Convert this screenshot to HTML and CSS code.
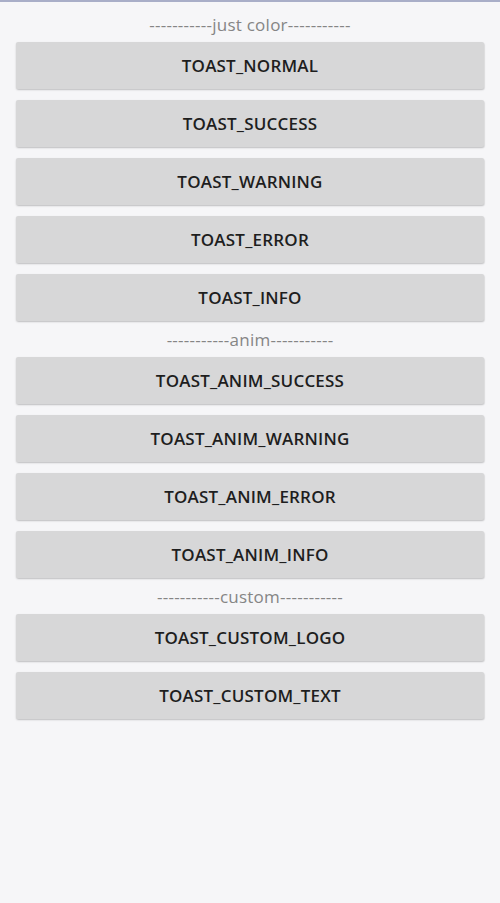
FILE: index.html
```html
<!DOCTYPE html>
<html>
<head>
<meta charset="utf-8">
<link rel="stylesheet" href="styles.css">
</head>
<body>
<div class="topline"></div>
<main class="list">
  <div class="label">-----------just color-----------</div>
  <div class="buttons">
    <button class="btn">TOAST_NORMAL</button>
    <button class="btn">TOAST_SUCCESS</button>
    <button class="btn">TOAST_WARNING</button>
    <button class="btn">TOAST_ERROR</button>
    <button class="btn">TOAST_INFO</button>
  </div>
  <div class="label">-----------anim-----------</div>
  <div class="buttons">
    <button class="btn">TOAST_ANIM_SUCCESS</button>
    <button class="btn">TOAST_ANIM_WARNING</button>
    <button class="btn">TOAST_ANIM_ERROR</button>
    <button class="btn">TOAST_ANIM_INFO</button>
  </div>
  <div class="label">-----------custom-----------</div>
  <div class="buttons">
    <button class="btn">TOAST_CUSTOM_LOGO</button>
    <button class="btn">TOAST_CUSTOM_TEXT</button>
  </div>
</main>
</body>
</html>
```
FILE: styles.css
```css
html, body {
  margin: 0;
  padding: 0;
  background: #f6f6f8;
  height: 100%;
}
body {
  font-family: "Open Sans", "Roboto", sans-serif;
}
.topline {
  height: 2px;
  background: #a9aec8;
}
.list {
  display: flex;
  flex-direction: column;
  padding: 4px 16px 0;
}
.label {
  height: 36px;
  line-height: 37px;
  text-align: center;
  font-size: 17px;
  color: #858585;
  letter-spacing: 0.25px;
}
.buttons {
  display: flex;
  flex-direction: column;
  gap: 11px;
}
.btn {
  height: 47px;
  border: none;
  border-radius: 2px;
  background: #d7d7d8;
  box-shadow: 0 1px 2px rgba(0,0,0,0.18), 1px 1px 1px rgba(0,0,0,0.06);
  font-family: "Open Sans", "Roboto", sans-serif;
  font-weight: 600;
  font-size: 17px;
  letter-spacing: 0.2px;
  color: #1e1e1e;
  padding: 0;
  margin: 0;
}
```
